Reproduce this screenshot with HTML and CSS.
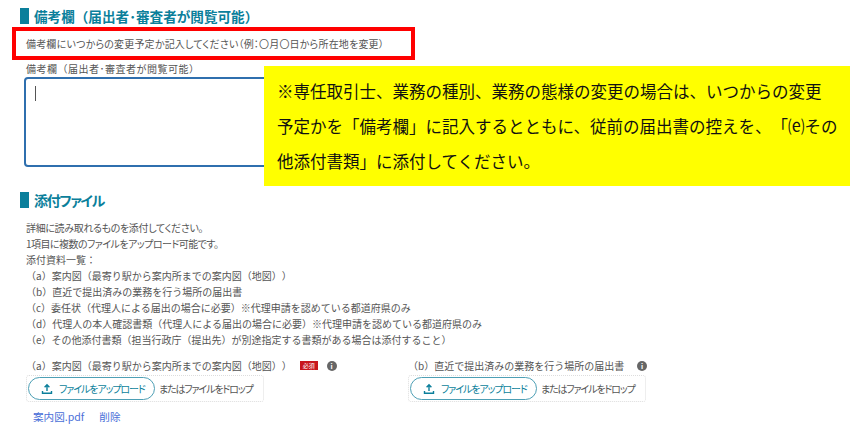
FILE: index.html
```html
<!DOCTYPE html>
<html lang="ja">
<head>
<meta charset="utf-8">
<title>備考欄</title>
<link rel="stylesheet" href="styles.css">
</head>
<body>
<main class="page">
  <h2 class="heading">備考欄（届出者･審査者が閲覧可能）</h2>
  <p class="notice prop">備考欄にいつからの変更予定か記入してください（例：〇月〇日から所在地を変更）</p>
  <label class="field-label">備考欄（届出者･審査者が閲覧可能）</label>
  <div class="textarea"><span class="caret"></span></div>

  <h2 class="heading heading-second prop">添付ファイル</h2>
  <ul class="info">
    <li class="prop tight-1">詳細に読み取れるものを添付してください。</li>
    <li class="prop tight-2">1項目に複数のファイルをアップロード可能です。</li>
    <li>添付資料一覧：</li>
    <li>（a）案内図（最寄り駅から案内所までの案内図（地図））</li>
    <li>（b）直近で提出済みの業務を行う場所の届出書</li>
    <li>（c）委任状（代理人による届出の場合に必要）※代理申請を認めている都道府県のみ</li>
    <li>（d）代理人の本人確認書類（代理人による届出の場合に必要）※代理申請を認めている都道府県のみ</li>
    <li>（e）その他添付書類（担当行政庁（提出先）が別途指定する書類がある場合は添付すること）</li>
  </ul>

  <div class="uploads">
    <section class="upload">
      <div class="upload-title">
        <span>（a）案内図（最寄り駅から案内所までの案内図（地図））</span>
        <span class="required">必須</span>
        <span class="info-dot">i</span>
      </div>
      <div class="dropzone">
        <span class="upload-btn">
          <svg class="upload-icon" viewBox="0 0 12 12"><path d="M6 8V2M3.6 4.2 6 1.8l2.4 2.4M1.5 8v2.3h9V8" fill="none" stroke="#0b7f9b" stroke-width="1.4"/></svg>
          <span class="prop btn-text">ファイルをアップロード</span>
        </span>
        <span class="drop-text prop">またはファイルをドロップ</span>
      </div>
      <div class="files"><a>案内図.pdf</a><a>削除</a></div>
    </section>
    <section class="upload">
      <div class="upload-title">
        <span>（b）直近で提出済みの業務を行う場所の届出書</span>
        <span class="info-dot">i</span>
      </div>
      <div class="dropzone">
        <span class="upload-btn">
          <svg class="upload-icon" viewBox="0 0 12 12"><path d="M6 8V2M3.6 4.2 6 1.8l2.4 2.4M1.5 8v2.3h9V8" fill="none" stroke="#0b7f9b" stroke-width="1.4"/></svg>
          <span class="prop btn-text">ファイルをアップロード</span>
        </span>
        <span class="drop-text prop">またはファイルをドロップ</span>
      </div>
    </section>
  </div>

  <aside class="callout">※専任取引士、業務の種別、業務の態様の変更の場合は、いつからの変更<br>予定かを「備考欄」に記入するとともに、従前の届出書の控えを、「⒠その<br>他添付書類」に添付してください。</aside>
</main>
</body>
</html>
```

FILE: styles.css
```css
* { box-sizing: border-box; }
html, body { margin: 0; padding: 0; background: #fff; }
body {
  font-family: "Noto Sans CJK JP", "Noto Sans", sans-serif;
  font-size: 10px;
  color: #555;
  overflow: hidden;
  text-spacing-trim: space-all;
}
.prop { font-feature-settings: "palt" 1; }
.page {
  position: relative;
  width: 858px;
  height: 434px;
  padding: 8px 0 0 12px;
  overflow: hidden;
}
.heading {
  margin: 0 0 0 8px;
  height: 16px;
  padding-left: 5px;
  border-left: 9px solid #0b7f9b;
  font-size: 13.6px;
  font-weight: 700;
  line-height: 16px;
  color: #0b7f9b;
}
.notice {
  margin: 3px 0 0;
  width: 403px;
  height: 33px;
  padding-left: 10px;
  border: 4px solid #f00;
  line-height: 25px;
  letter-spacing: 0.18px;
  white-space: nowrap;
}
.field-label {
  display: block;
  margin: 0 0 0 14px;
  line-height: 15px;
  padding-top: 1px;
  height: 17px;
  letter-spacing: 0.5px;
}
.textarea {
  margin-left: 12px;
  width: 810px;
  height: 90px;
  border: 2px solid #2f6fae;
  border-radius: 4px;
  padding: 7px 9px;
}
.caret {
  display: block;
  width: 1px;
  height: 15px;
  background: #555;
}
.heading-second { margin-top: 25px; font-size: 14px; letter-spacing: -1.3px; }
.info {
  list-style: none;
  margin: 12px 0 0 14px;
  padding: 0;
  line-height: 16px;
  white-space: nowrap;
}
.tight-1 { letter-spacing: -0.35px; }
.tight-2 { letter-spacing: -0.55px; }
.uploads {
  display: flex;
  margin: 10px 0 0 14px;
}
.upload { width: 382px; }
.upload-title {
  display: flex;
  align-items: center;
  height: 15px;
  white-space: nowrap;
}
.required {
  margin-left: 8px;
  width: 18px;
  height: 9px;
  background: #c8161d;
  color: #fff;
  font-size: 6px;
  line-height: 9px;
  text-align: center;
}
.info-dot {
  margin-left: 9px;
  width: 10px;
  height: 10px;
  border-radius: 50%;
  background: #666;
  color: #fff;
  font-size: 7px;
  font-weight: 700;
  line-height: 10px;
  text-align: center;
}
.upload-title .info-dot:nth-child(2) { margin-left: 13px; }
.dropzone {
  display: flex;
  align-items: center;
  width: 238px;
  height: 27px;
  margin-top: 2px;
  border: 1px dotted #ddd;
  border-radius: 3px;
  padding-left: 1px;
}
.upload-btn {
  display: flex;
  align-items: center;
  gap: 6px;
  flex: none;
  width: 127px;
  height: 23px;
  padding-left: 12px;
  border: 1px solid #4d9fb5;
  border-radius: 12px;
  color: #0b7f9b;
  white-space: nowrap;
}
.btn-text { letter-spacing: -1.1px; }
.upload-icon { width: 12px; height: 12px; flex: none; }
.drop-text { margin-left: 4px; white-space: nowrap; letter-spacing: -1.15px; }
.files {
  display: flex;
  gap: 15px;
  margin: 7px 0 0 7px;
  line-height: 15px;
  font-size: 10.6px;
  color: #4a6fd8;
}
.callout {
  position: absolute;
  left: 264px;
  top: 66px;
  width: 586px;
  height: 120px;
  padding: 8px 0 0 13px;
  background: #ff0;
  color: #111;
  font-size: 16.5px;
  line-height: 35px;
  white-space: nowrap;
}
```
